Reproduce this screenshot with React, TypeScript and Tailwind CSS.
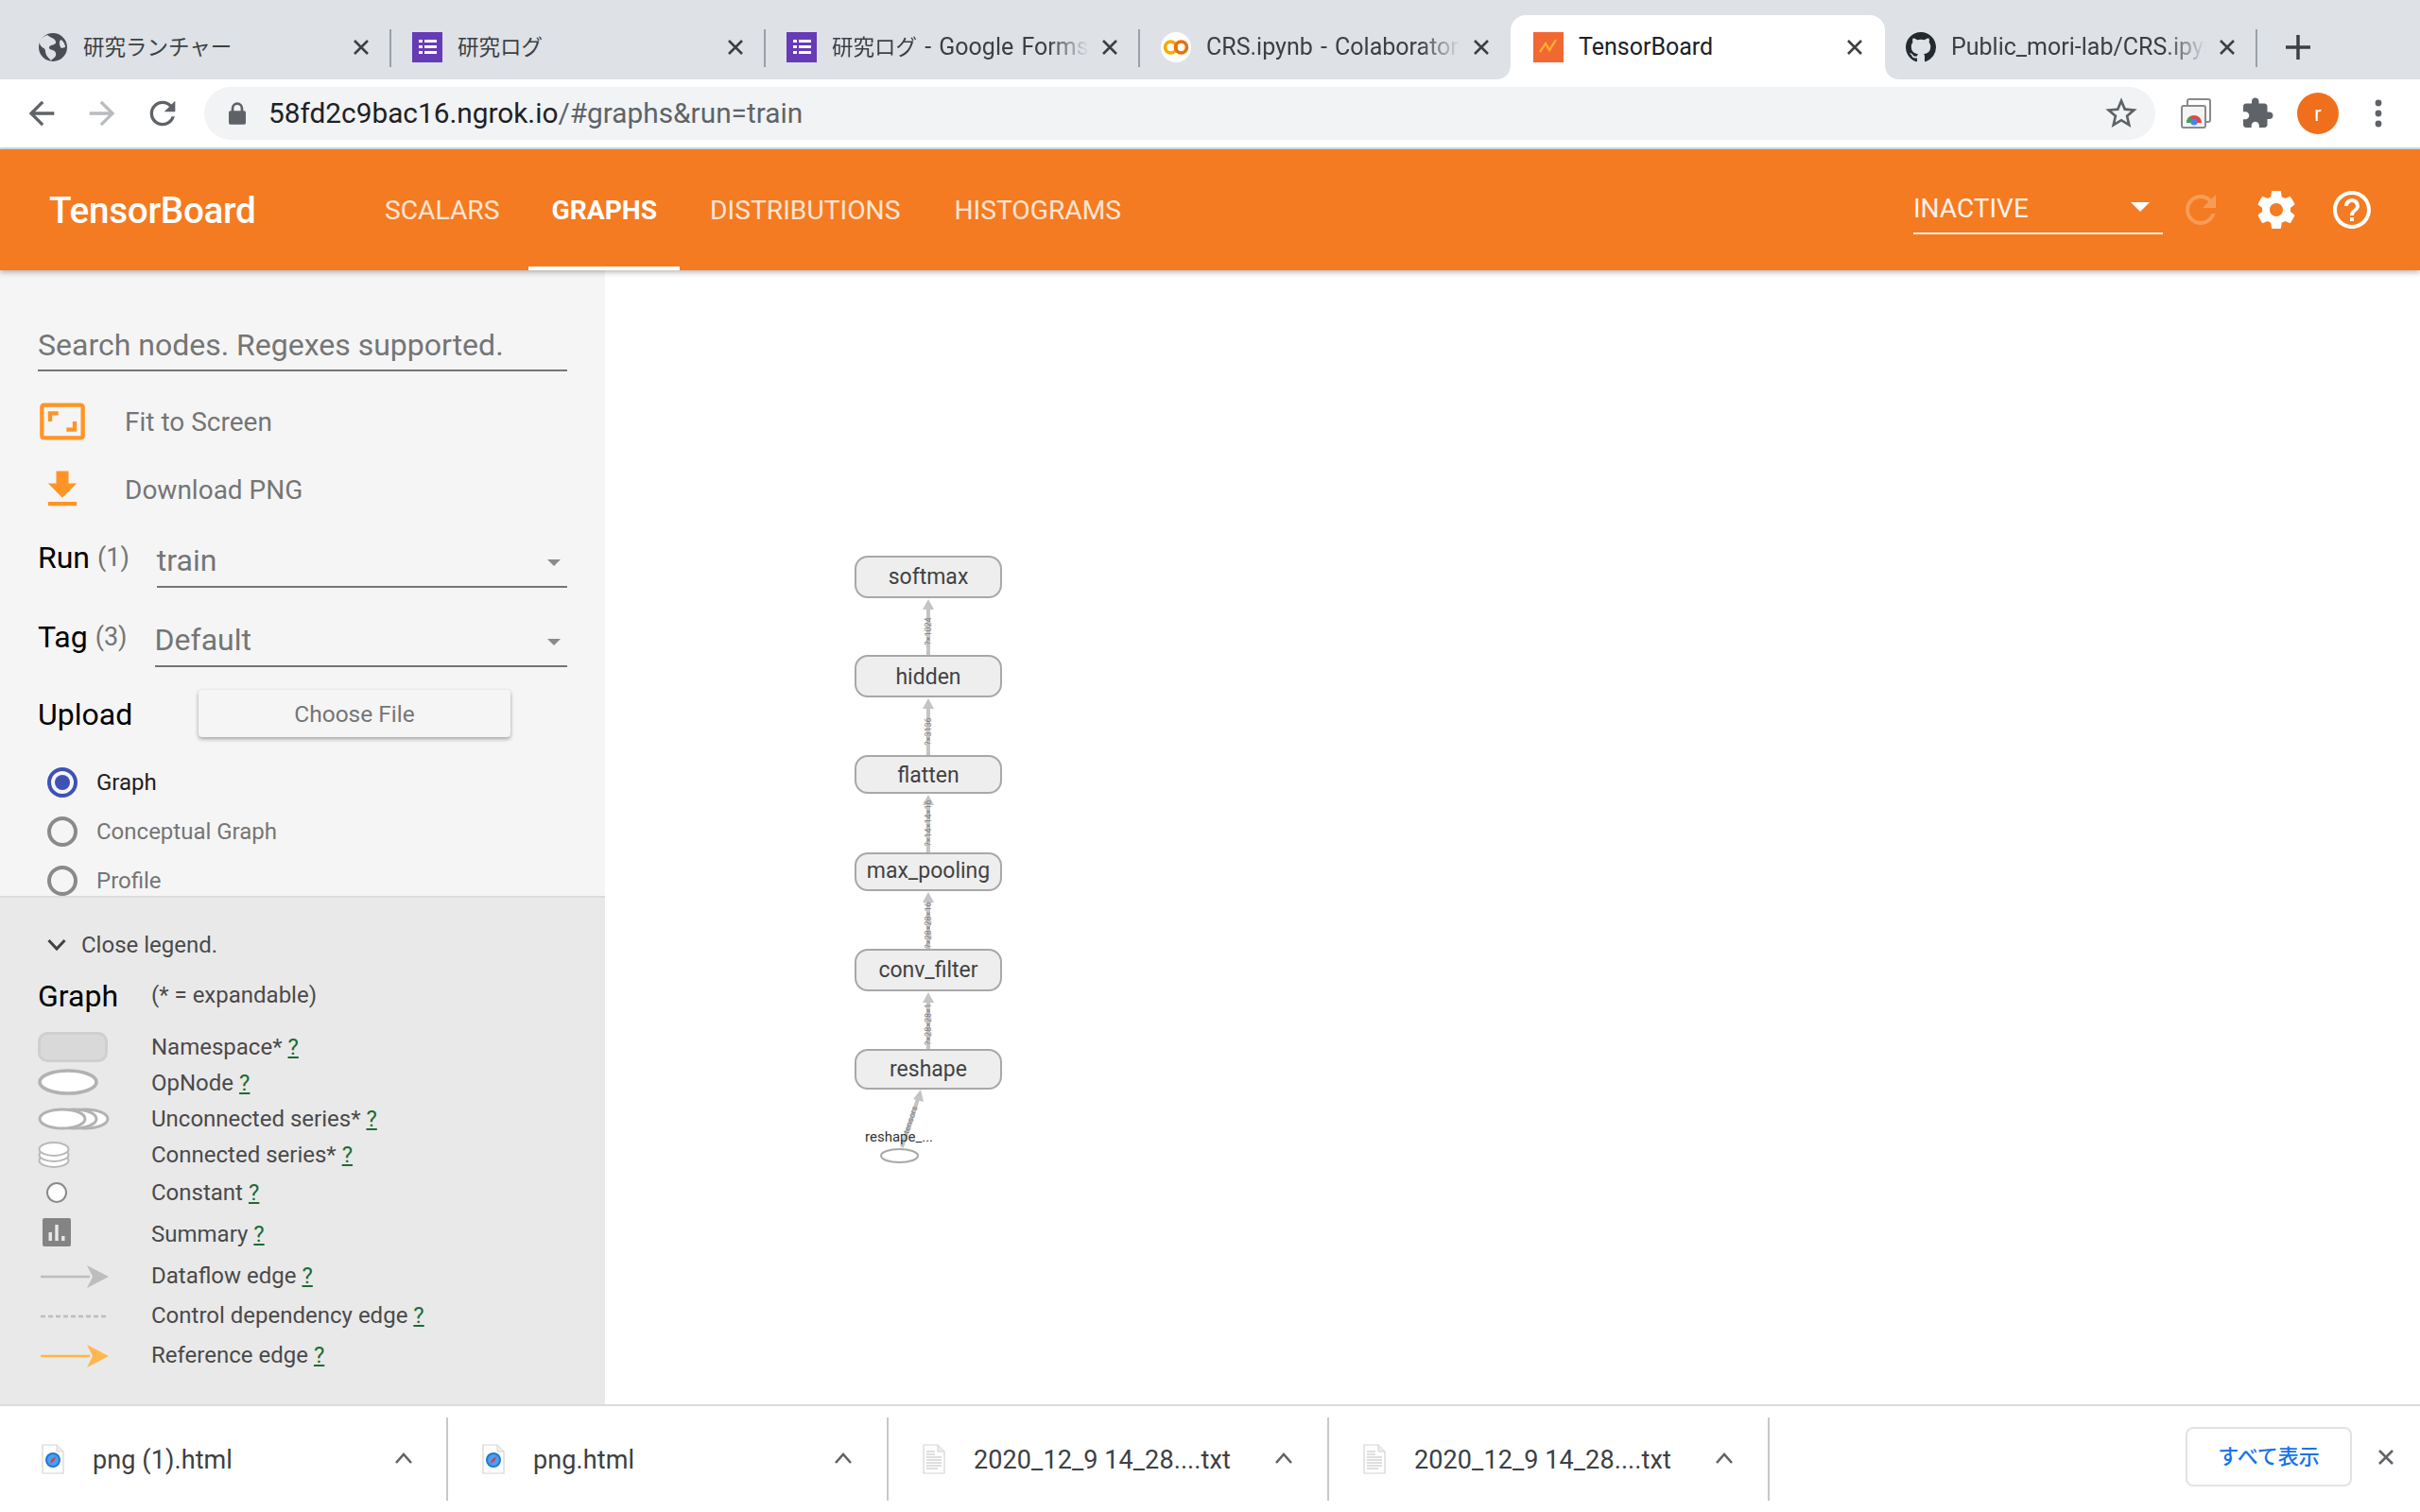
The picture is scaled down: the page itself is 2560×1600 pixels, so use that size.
import React from "react";

const P = {
  back: "M20 11H7.83l5.59-5.59L12 4l-8 8 8 8 1.41-1.41L7.83 13H20v-2z",
  forward: "M12 4l-1.41 1.41L16.17 11H4v2h12.17l-5.58 5.59L12 20l8-8z",
  reload: "M17.65 6.35C16.2 4.9 14.21 4 12 4c-4.42 0-7.99 3.58-7.99 8s3.57 8 7.99 8c3.73 0 6.84-2.55 7.73-6h-2.08c-.82 2.33-3.04 4-5.65 4-3.31 0-6-2.69-6-6s2.69-6 6-6c1.66 0 3.14.69 4.22 1.78L13 11h7V4l-2.35 2.35z",
  star: "M22 9.24l-7.19-.62L12 2 9.19 8.63 2 9.24l5.46 4.73L5.82 21 12 17.27 18.18 21l-1.63-7.03L22 9.24zM12 15.4l-3.76 2.27 1-4.28-3.32-2.88 4.38-.38L12 6.1l1.71 4.04 4.38.38-3.32 2.88 1 4.28L12 15.4z",
  puzzle: "M20.5 11H19V7c0-1.1-.9-2-2-2h-4V3.5C13 2.12 11.88 1 10.5 1S8 2.12 8 3.5V5H4c-1.1 0-1.99.9-1.99 2v3.8H3.5c1.49 0 2.7 1.21 2.7 2.7s-1.21 2.7-2.7 2.7H2V20c0 1.1.9 2 2 2h3.8v-1.5c0-1.49 1.21-2.7 2.7-2.7 1.49 0 2.7 1.21 2.7 2.7V22H17c1.1 0 2-.9 2-2v-4h1.5c1.38 0 2.5-1.12 2.5-2.5S21.88 11 20.5 11z",
  gear: "M19.43 12.98c.04-.32.07-.64.07-.98s-.03-.66-.07-.98l2.11-1.65c.19-.15.24-.42.12-.64l-2-3.46c-.12-.22-.39-.3-.61-.22l-2.49 1c-.52-.4-1.08-.73-1.69-.98l-.38-2.65C14.46 2.18 14.25 2 14 2h-4c-.25 0-.46.18-.49.42l-.38 2.65c-.61.25-1.17.59-1.69.98l-2.49-1c-.23-.09-.49 0-.61.22l-2 3.46c-.13.22-.07.49.12.64l2.11 1.65c-.04.32-.07.65-.07.98s.03.66.07.98l-2.11 1.65c-.19.15-.24.42-.12.64l2 3.46c.12.22.39.3.61.22l2.49-1c.52.4 1.08.73 1.69.98l.38 2.65c.03.24.24.42.49.42h4c.25 0 .46-.18.49-.42l.38-2.65c.61-.25 1.17-.59 1.69-.98l2.49 1c.23.09.49 0 .61-.22l2-3.46c.12-.22.07-.49-.12-.64l-2.11-1.65zM12 15.5c-1.93 0-3.5-1.57-3.5-3.5s1.57-3.5 3.5-3.5 3.5 1.57 3.5 3.5-1.57 3.5-3.5 3.5z",
  help: "M11 18h2v-2h-2v2zm1-16C6.48 2 2 6.48 2 12s4.48 10 10 10 10-4.48 10-10S17.52 2 12 2zm0 18c-4.41 0-8-3.59-8-8s3.59-8 8-8 8 3.59 8 8-3.59 8-8 8zm0-14c-2.21 0-4 1.79-4 4h2c0-1.1.9-2 2-2s2 .9 2 2c0 2-3 1.75-3 5h2c0-2.25 3-2.5 3-5 0-2.21-1.79-4-4-4z",
  fit: "M19 12h-2v3h-3v2h5v-5zM7 9h3V7H5v5h2V9zm14-6H3c-1.1 0-2 .9-2 2v14c0 1.1.9 2 2 2h18c1.1 0 2-.9 2-2V5c0-1.1-.9-2-2-2zm0 16.01H3V4.99h18v14.02z",
  download: "M19 9h-4V3H9v6H5l7 7 7-7zM5 18v2h14v-2H5z",
  github: "M8 0C3.58 0 0 3.58 0 8c0 3.54 2.29 6.53 5.47 7.59.4.07.55-.17.55-.38 0-.19-.01-.82-.01-1.49-2.01.37-2.53-.49-2.69-.94-.09-.23-.48-.94-.82-1.13-.28-.15-.68-.52-.01-.53.63-.01 1.08.58 1.23.82.72 1.21 1.87.87 2.33.66.07-.52.28-.87.51-1.07-1.78-.2-3.64-.89-3.64-3.95 0-.87.31-1.59.82-2.15-.08-.2-.36-1.02.08-2.12 0 0 .67-.21 2.2.82.64-.18 1.32-.27 2-.27.68 0 1.36.09 2 .27 1.53-1.04 2.2-.82 2.2-.82.44 1.1.16 1.92.08 2.12.51.56.82 1.27.82 2.15 0 3.07-1.87 3.75-3.65 3.95.29.25.54.73.54 1.48 0 1.07-.01 1.93-.01 2.2 0 .21.15.46.55.38A8.013 8.013 0 0016 8c0-4.42-3.58-8-8-8z",
};

function Mat({ d, className, box = 24 }: { d: string; className: string; box?: number }) {
  return (
    <svg viewBox={`0 0 ${box} ${box}`} className={className} fill="currentColor">
      <path d={d} />
    </svg>
  );
}

function Globe() {
  return (
    <svg viewBox="0 0 32 32" className="w-8 h-8 shrink-0">
      <circle cx="16" cy="16" r="15" fill="#4a4e54" />
      <path d="M10 3c3 3 8 3 9 7s-6 3-7 6 6 2 7 6-2 5-5 8c-3-3-6-6-6-10s-5-3-6-8 4-7 8-9z" fill="#dee1e6" />
      <path d="M24 8c3 1 5 5 5 8l-4 1c-2-2-3-6-1-9z" fill="#dee1e6" />
    </svg>
  );
}

function Forms() {
  return (
    <svg viewBox="0 0 32 32" className="w-8 h-8 shrink-0">
      <rect width="32" height="32" fill="#673ab7" />
      <g fill="#fff">
        <rect x="7" y="8" width="4" height="3" />
        <rect x="13" y="8" width="13" height="3" />
        <rect x="7" y="14" width="4" height="3" />
        <rect x="13" y="14" width="13" height="3" />
        <rect x="7" y="20" width="4" height="3" />
        <rect x="13" y="20" width="13" height="3" />
      </g>
    </svg>
  );
}

function Colab() {
  return (
    <svg viewBox="0 0 32 32" className="w-8 h-8 shrink-0">
      <circle cx="16" cy="16" r="16" fill="#fff" />
      <circle cx="10.5" cy="16" r="6" fill="none" stroke="#f9ab00" strokeWidth="3.6" />
      <circle cx="21.5" cy="16" r="6" fill="none" stroke="#e8710a" strokeWidth="3.6" />
    </svg>
  );
}

function TbIcon() {
  return (
    <svg viewBox="0 0 32 32" className="w-8 h-8 shrink-0">
      <rect width="32" height="32" fill="#f26833" />
      <path d="M7 21l6-9 4 7 7-11" fill="none" stroke="#fdb52c" strokeWidth="2.2" />
    </svg>
  );
}

function Github() {
  return (
    <svg viewBox="0 0 16 16" className="w-8 h-8 shrink-0" fill="#24292e">
      <path d={P.github} />
    </svg>
  );
}

function Close({ className = "text-[#3c4043]" }: { className?: string }) {
  return (
    <svg viewBox="0 0 20 20" className={`w-5 h-5 shrink-0 ${className}`} fill="none" stroke="currentColor" strokeWidth="2.6">
      <path d="M3 3l14 14M17 3L3 17" />
    </svg>
  );
}

function Tab({ icon, title, active, fade, sep, pad = "pl-[26px] pr-[18px]" }: { icon: React.ReactNode; title: React.ReactNode; active?: boolean; fade?: boolean; sep?: boolean; pad?: string }) {
  return (
    <div className={`relative flex items-center w-[396px] h-[68px] shrink-0 ${pad} ${active ? "bg-white rounded-t-2xl" : ""}`}>
      {active && (
        <>
          <svg viewBox="0 0 16 16" className="absolute bottom-0 left-[-16px] w-4 h-4" fill="#fff"><path d="M16 0v16H0C10 16 16 10 16 0z" /></svg>
          <svg viewBox="0 0 16 16" className="absolute bottom-0 right-[-16px] w-4 h-4" fill="#fff"><path d="M0 0v16h16C6 16 0 10 0 0z" /></svg>
        </>
      )}
      {icon}
      <span className={`ml-[16px] flex-1 overflow-hidden whitespace-nowrap text-[25px] leading-8 [word-spacing:2px] ${fade ? "[mask-image:linear-gradient(to_right,#000_84%,transparent_100%)]" : ""} ${active ? "text-[#202124]" : "text-[#3c4043]"}`}>{title}</span>
      <span className="ml-[12px]"><Close /></span>
      {sep && <span className="absolute right-[-4px] top-[15px] h-10 w-0.5 bg-[#9aa0a6]" />}
    </div>
  );
}

function FileIcon({ kind }: { kind: "safari" | "text" }) {
  return (
    <svg viewBox="0 0 24 32" className="w-6 h-8 shrink-0">
      <path d="M1 1h15l7 7v23H1z" fill="#fff" stroke="#d4d4d4" strokeWidth="1.2" />
      <path d="M16 1v7h7" fill="#eee" stroke="#d4d4d4" strokeWidth="1" />
      {kind === "safari" ? (
        <>
          <circle cx="12" cy="17" r="8" fill="#1e78d8" />
          <circle cx="12" cy="17" r="6" fill="#4aa0f0" />
          <path d="M15.5 13l-2.5 5-4.5 3 2.5-5z" fill="#e33" />
        </>
      ) : (
        <path d="M4 8h9M4 11h9M4 14h16M4 17h16M4 20h16M4 23h16M4 26h12" stroke="#bdbdbd" strokeWidth="1" />
      )}
    </svg>
  );
}

function Download({ icon, name, widthClass, caret }: { icon: "safari" | "text"; name: string; widthClass: string; caret: string }) {
  return (
    <div className={`relative flex items-center h-[88px] shrink-0 ${widthClass}`}>
      <FileIcon kind={icon} />
      <span className="ml-[30px] pt-[2px] text-[27px] tracking-[0.1px] text-[#3c4043] whitespace-nowrap leading-8">{name}</span>
      <svg viewBox="0 0 20 12" className={`absolute top-[37px] w-5 h-3 text-[#5f6368] ${caret}`} fill="none" stroke="currentColor" strokeWidth="2.6">
        <path d="M2 11l8-9 8 9" />
      </svg>
      <span className="absolute right-0 top-0 h-full w-0.5 bg-[#c8c8c8]" />
    </div>
  );
}

function Radio({ label, on }: { label: string; on?: boolean }) {
  return (
    <div className="flex items-center h-[52px] pl-[50px]">
      <span className={`flex items-center justify-center w-8 h-8 rounded-full border-[4px] ${on ? "border-[#3f51b5]" : "border-[#8a8a8a]"}`}>
        {on && <span className="w-[16px] h-[16px] rounded-full bg-[#3f51b5]" />}
      </span>
      <span className={`ml-[20px] text-[24px] ${on ? "text-[#212121]" : "text-[#757575]"}`}>{label}</span>
    </div>
  );
}

function SelectRow({ title, count, value, indent }: { title: string; count: string; value: string; indent: string }) {
  return (
    <div className="flex h-[68px] pl-[40px] pr-[40px]">
      <div className="flex items-center h-[72px] whitespace-nowrap">
        <span className="text-[32px] text-black">{title}</span>
        <span className="ml-[8px] text-[27px] text-[#757575]">{count}</span>
      </div>
      <div className={`relative flex-1 flex items-center border-b-2 border-[#757575] pt-[12px] ${indent}`}>
        <span className="text-[32px] text-[#757575]">{value}</span>
        <span className="absolute right-[7px] top-[38px] w-0 h-0 border-x-[7px] border-x-transparent border-t-[7px] border-t-[#8a8a8a]" />
      </div>
    </div>
  );
}

function Q() {
  return <span className="ml-[6px] text-[#1b6b33] underline underline-offset-2">?</span>;
}

function Arrow({ color }: { color: string }) {
  return (
    <svg viewBox="0 0 72 24" className="ml-[3px] mt-[2px] w-[72px] h-6">
      <path d="M0 12h52" stroke={color} strokeWidth="2.6" />
      <path d="M49 0l23 12-23 12 6-12z" fill={color} />
    </svg>
  );
}

const legend: { h: string; icon: React.ReactNode; label: string }[] = [
  {
    h: "h-[38px]",
    label: "Namespace*",
    icon: <span className="block w-[74px] h-[32px] rounded-[10px] bg-[#d9d9d9] border-[3px] border-[#cfcfcf]" />,
  },
  {
    h: "h-[38px]",
    label: "OpNode",
    icon: (
      <svg viewBox="0 0 64 28" className="-mt-[2px] w-16 h-7"><ellipse cx="32" cy="14" rx="30" ry="12" fill="#fff" stroke="#b2b2b2" strokeWidth="3.6" /></svg>
    ),
  },
  {
    h: "h-[38px]",
    label: "Unconnected series*",
    icon: (
      <svg viewBox="0 0 76 24" className="w-[76px] h-6">
        <ellipse cx="50" cy="12" rx="24" ry="10" fill="#fff" stroke="#b2b2b2" strokeWidth="3" />
        <ellipse cx="38" cy="12" rx="24" ry="10" fill="#fff" stroke="#b2b2b2" strokeWidth="3" />
        <ellipse cx="26" cy="12" rx="24" ry="10" fill="#fff" stroke="#b2b2b2" strokeWidth="3" />
      </svg>
    ),
  },
  {
    h: "h-[38px]",
    label: "Connected series*",
    icon: (
      <svg viewBox="0 0 34 32" className="w-[34px] h-8">
        <ellipse cx="17" cy="22" rx="15.5" ry="7" fill="#fff" stroke="#b8b8b8" strokeWidth="2" />
        <ellipse cx="17" cy="16" rx="15.5" ry="7" fill="#fff" stroke="#b8b8b8" strokeWidth="2" />
        <ellipse cx="17" cy="10" rx="15.5" ry="7" fill="#fff" stroke="#b8b8b8" strokeWidth="2" />
      </svg>
    ),
  },
  {
    h: "h-[42px]",
    label: "Constant",
    icon: <span className="block ml-[9px] w-[22px] h-[22px] rounded-full bg-white border-2 border-[#8a8a8a]" />,
  },
  {
    h: "h-[46px]",
    label: "Summary",
    icon: (
      <svg viewBox="0 0 30 30" className="ml-[5px] -mt-[4px] w-[30px] h-[30px]">
        <rect width="30" height="30" rx="2" fill="#848484" />
        <rect x="6.5" y="15" width="3.4" height="9" fill="#e9e9e9" />
        <rect x="13.3" y="7" width="3.4" height="17" fill="#e9e9e9" />
        <rect x="20.1" y="19" width="3.4" height="5" fill="#e9e9e9" />
      </svg>
    ),
  },
  {
    h: "h-[42px]",
    label: "Dataflow edge",
    icon: <Arrow color="#bdbdbd" />,
  },
  {
    h: "h-[42px]",
    label: "Control dependency edge",
    icon: (
      <svg viewBox="0 0 72 4" className="ml-[3px] mt-[2px] w-[72px] h-1"><path d="M0 2h72" stroke="#bdbdbd" strokeWidth="2.4" strokeDasharray="5 3" /></svg>
    ),
  },
  {
    h: "h-[42px]",
    label: "Reference edge",
    icon: <Arrow color="#ffb74d" />,
  },
];

const nodes = [
  { t: "softmax", y: 589, h: 43, b: 618 },
  { t: "hidden", y: 694, h: 43, b: 723.5 },
  { t: "flatten", y: 800, h: 39, b: 827.5 },
  { t: "max_pooling", y: 903, h: 39, b: 929 },
  { t: "conv_filter", y: 1005, h: 43, b: 1034 },
  { t: "reshape", y: 1111, h: 41, b: 1139 },
];

const edges = [
  { y1: 694, y2: 634, l: "?×1024", ly: 668 },
  { y1: 800, y2: 739, l: "?×3136", ly: 774 },
  { y1: 903, y2: 841, l: "?×14×14×16", ly: 871 },
  { y1: 1005, y2: 944, l: "?×28×28×16", ly: 979 },
  { y1: 1111, y2: 1050, l: "?×28×28×1", ly: 1084 },
];

function Graph() {
  return (
    <svg viewBox="640 286 1920 1200" className="w-full h-full block" style={{ fontFamily: "Roboto, sans-serif" }}>
      {edges.map((e) => (
        <g key={e.l}>
          <path d={`M982 ${e.y1}V${e.y2 + 10}`} stroke="#c4c4c4" strokeWidth="4" />
          <path d={`M982 ${e.y2}l6 11h-12z`} fill="#c4c4c4" />
          <text x="0" y="0" transform={`translate(985 ${e.ly}) rotate(-90)`} fontSize="9" fill="#808080" textAnchor="middle">{e.l}</text>
        </g>
      ))}
      <path d="M954 1214L971 1163" stroke="#c4c4c4" strokeWidth="4" />
      <path d="M974 1153l3 13-11-3z" fill="#c4c4c4" />
      <text transform="translate(966 1186) rotate(-72)" fontSize="9" fill="#808080" textAnchor="middle">tensors</text>
      {nodes.map((n) => (
        <g key={n.t}>
          <rect x="905" y={n.y} width="154" height={n.h} rx="13" fill="#eeeeee" stroke="#a8a8a8" strokeWidth="2" />
          <text x="982" y={n.b} fontSize="23" fill="#424242" textAnchor="middle">{n.t}</text>
        </g>
      ))}
      <text x="915" y="1208" fontSize="15" fill="#333">reshape_...</text>
      <ellipse cx="951.5" cy="1223" rx="19.5" ry="7" fill="#fff" stroke="#a8a8a8" strokeWidth="2" />
    </svg>
  );
}

export default function App() {
  return (
    <div className="flex flex-col w-[2560px] h-[1600px] overflow-hidden bg-white font-['Roboto','Noto_Sans_CJK_JP',sans-serif]">
      {/* Tab strip */}
      <div className="flex items-end h-[84px] pl-[14px] bg-[#dee1e6] shrink-0">
        <Tab icon={<Globe />} title={<span className="text-[22.5px]">研究ランチャー</span>} sep />
        <Tab icon={<Forms />} title={<span className="text-[22.5px]">研究ログ</span>} sep />
        <Tab icon={<Forms />} title={<><span className="text-[22.5px]">研究ログ</span> - Google Forms</>} fade sep />
        <Tab icon={<Colab />} title="CRS.ipynb - Colaboratory" fade pad="pl-[26px] pr-[21px]" />
        <Tab icon={<TbIcon />} title="TensorBoard" active pad="pl-[24px] pr-[22px]" />
        <div className="relative w-[394px] shrink-0">
          <Tab icon={<Github />} title="Public_mori-lab/CRS.ipynb" fade pad="pl-[22px] pr-[24px]" />
          <span className="absolute right-0 top-[15px] h-10 w-0.5 bg-[#9aa0a6]" />
        </div>
        <svg viewBox="0 0 24 24" className="ml-[30px] mb-[21px] w-[26px] h-[26px] text-[#3c4043]" fill="currentColor">
          <path d="M10.4 0h3.2v10.4H24v3.2H13.6V24h-3.2V13.6H0v-3.2h10.4z" />
        </svg>
      </div>

      {/* Toolbar */}
      <div className="flex items-center h-[74px] shrink-0 border-b-2 border-[#dadce0] bg-white">
        <div className="flex items-center w-[216px] shrink-0 pl-[24px] gap-[24px]">
          <Mat d={P.back} className="w-10 h-10 text-[#5f6368]" />
          <Mat d={P.forward} className="w-10 h-10 text-[#b9bbbe]" />
          <Mat d={P.reload} className="w-10 h-10 text-[#5f6368]" />
        </div>
        <div className="flex items-center flex-1 h-[56px] rounded-full bg-[#f1f3f4] pl-[26px] pr-[16px]">
          <svg viewBox="0 0 20 26" className="w-[18px] h-[24px] text-[#5f6368]" fill="currentColor">
            <path d="M3 10V7a7 7 0 0114 0v3h1a2 2 0 012 2v12a2 2 0 01-2 2H2a2 2 0 01-2-2V12a2 2 0 012-2zm3 0h8V7a4 4 0 00-8 0z" />
          </svg>
          <span className="ml-[24px] flex-1 text-[29.8px] text-[#202124] whitespace-nowrap">
            58fd2c9bac16.ngrok.io<span className="text-[#5f6368]">/#graphs&amp;run=train</span>
          </span>
          <Mat d={P.star} className="w-10 h-10 text-[#5f6368]" />
        </div>
        <div className="flex items-center w-[280px] shrink-0 pl-[24px]">
          <svg viewBox="0 0 32 32" className="ml-[3px] w-8 h-8">
            <rect x="7" y="1" width="24" height="24" rx="2" fill="#fff" stroke="#8a8a8a" strokeWidth="2" />
            <rect x="1" y="8" width="25" height="23" rx="2" fill="#f4f4f4" stroke="#8a8a8a" strokeWidth="2" />
            <path d="M6 26a8 8 0 0116 0z" fill="#ea4335" />
            <path d="M6 26a8 8 0 014-7l3 7z" fill="#34a853" />
            <circle cx="14" cy="25" r="3.6" fill="#4285f4" />
          </svg>
          <Mat d={P.puzzle} className="ml-[31px] w-9 h-9 text-[#5f6368]" />
          <span className="ml-[24px] flex items-center justify-center w-11 h-11 rounded-full bg-[#f06f1d] text-white text-[22px]">r</span>
          <svg viewBox="0 0 8 32" className="ml-[38px] w-2 h-8" fill="#5f6368">
            <circle cx="4" cy="5" r="3.4" /><circle cx="4" cy="16" r="3.4" /><circle cx="4" cy="27" r="3.4" />
          </svg>
        </div>
      </div>

      {/* TensorBoard header */}
      <div className="relative z-10 flex items-center h-[128px] shrink-0 bg-[#f47b21] text-white shadow-[0_2px_6px_rgba(0,0,0,0.3)]">
        <span className="ml-[52px] w-[327px] text-[38.7px] font-medium tracking-[-0.3px] pt-[3px]">TensorBoard</span>
        <div className="flex items-stretch h-full text-[28.2px]">
          <div className="flex items-center pl-[28px] pr-[31px] pt-[3px] text-white/80">SCALARS</div>
          <div className="flex items-center px-[24px] font-bold border-b-[4px] border-white pt-[7px]">GRAPHS</div>
          <div className="flex items-center px-[32px] pt-[3px] text-white/80">DISTRIBUTIONS</div>
          <div className="flex items-center px-[25px] pt-[3px] text-white/80">HISTOGRAMS</div>
        </div>
        <div className="ml-auto flex items-center pr-[48px]">
          <div className="relative flex items-center w-[264px] h-[54px] border-b-2 border-white/90 text-white/90 text-[28px] -mt-[2px] pt-[2px]">
            INACTIVE
            <span className="absolute right-[14px] top-[20px] w-0 h-0 border-x-[10px] border-x-transparent border-t-[10px] border-t-white" />
          </div>
          <Mat d={P.reload} className="ml-[16px] w-12 h-12 text-white/25" />
          <Mat d={P.gear} className="ml-[32px] w-12 h-12" />
          <Mat d={P.help} className="ml-[32px] w-12 h-12" />
        </div>
      </div>

      {/* Body */}
      <div className="flex flex-1 min-h-0">
        <aside className="flex flex-col w-[640px] shrink-0 bg-[#f5f5f5]">
          <div className="h-[662px] overflow-hidden shrink-0">
            <div className="mt-[50px] mx-[40px] h-[57px] flex items-center border-b-2 border-[#757575] pt-[2px] text-[32px] text-[#757575] whitespace-nowrap">Search nodes. Regexes supported.</div>
            <div className="mt-[17px] flex items-center h-[72px] pl-[40px] text-[#ff9426]">
              <Mat d={P.fit} className="w-[52px] h-[52px] ml-0" />
              <span className="ml-[40px] pt-[2px] text-[28px] text-[#757575]">Fit to Screen</span>
            </div>
            <div className="flex items-center h-[72px] pl-[40px] text-[#ff9426]">
              <Mat d={P.download} className="w-[52px] h-[52px] ml-0" />
              <span className="ml-[40px] pt-[2px] text-[28px] text-[#757575]">Download PNG</span>
            </div>
            <SelectRow title="Run" count="(1)" value="train" indent="ml-[29px]" />
            <div className="h-4" />
            <SelectRow title="Tag" count="(3)" value="Default" indent="ml-[29px]" />
            <div className="mt-[24px] flex items-center h-[50px] pl-[40px]">
              <span className="w-[170px] pt-[2px] text-[32px] text-black">Upload</span>
              <div className="flex items-center justify-center w-[330px] h-[50px] pt-[2px] rounded-[4px] bg-[#f5f5f5] text-[24.5px] text-[#757575] shadow-[0_2px_4px_rgba(0,0,0,0.35)]">Choose File</div>
            </div>
            <div className="mt-[22px]">
              <Radio label="Graph" on />
              <Radio label="Conceptual Graph" />
              <Radio label="Profile" />
            </div>
          </div>
          <div className="flex-1 bg-[#e9e9e9] border-t-2 border-[#dcdcdc]">
            <div className="flex items-center h-[40px] mt-[30px] pl-[50px] text-[24px] text-[#4a4a4a]">
              <svg viewBox="0 0 20 14" className="w-5 h-3.5" fill="none" stroke="#424242" strokeWidth="3"><path d="M1.5 2l8.5 9 8.5-9" /></svg>
              <span className="ml-[16px]">Close legend.</span>
            </div>
            <div className="flex items-center h-[44px] mt-[12px] pl-[40px]">
              <span className="w-[120px] text-[32px] text-black">Graph</span>
              <span className="pb-[2px] text-[24px] text-[#4a4a4a]">(* = expandable)</span>
            </div>
            <div className="mt-[13px]">
              {legend.map((r) => (
                <div key={r.label} className={`flex items-center pl-[40px] ${r.h}`}>
                  <div className="w-[120px] shrink-0">{r.icon}</div>
                  <span className="text-[24px] text-[#4a4a4a] whitespace-nowrap">{r.label}<Q /></span>
                </div>
              ))}
            </div>
          </div>
        </aside>
        <main className="flex-1 min-w-0 bg-white">
          <Graph />
        </main>
      </div>

      {/* Download bar */}
      <div className="flex items-start h-[114px] shrink-0 border-t-2 border-[#dadce0] bg-white pt-[12px]">
        <Download icon="safari" name="png (1).html" widthClass="w-[474px] pl-[44px]" caret="left-[417px]" />
        <Download icon="safari" name="png.html" widthClass="w-[466px] pl-[36px]" caret="left-[408px]" />
        <Download icon="text" name="2020_12_9 14_28....txt" widthClass="w-[466px] pl-[36px]" caret="left-[408px]" />
        <Download icon="text" name="2020_12_9 14_28....txt" widthClass="w-[466px] pl-[36px]" caret="left-[408px]" />
        <div className="ml-auto flex items-center pr-[26px] pt-[10px]">
          <div className="flex items-center justify-center w-[176px] h-[63px] rounded-[8px] border-2 border-[#e3e3e3] text-[22px] text-[#1a73e8] font-medium">すべて表示</div>
          <span className="ml-[26px]"><Close className="text-[#5f6368]" /></span>
        </div>
      </div>
    </div>
  );
}
